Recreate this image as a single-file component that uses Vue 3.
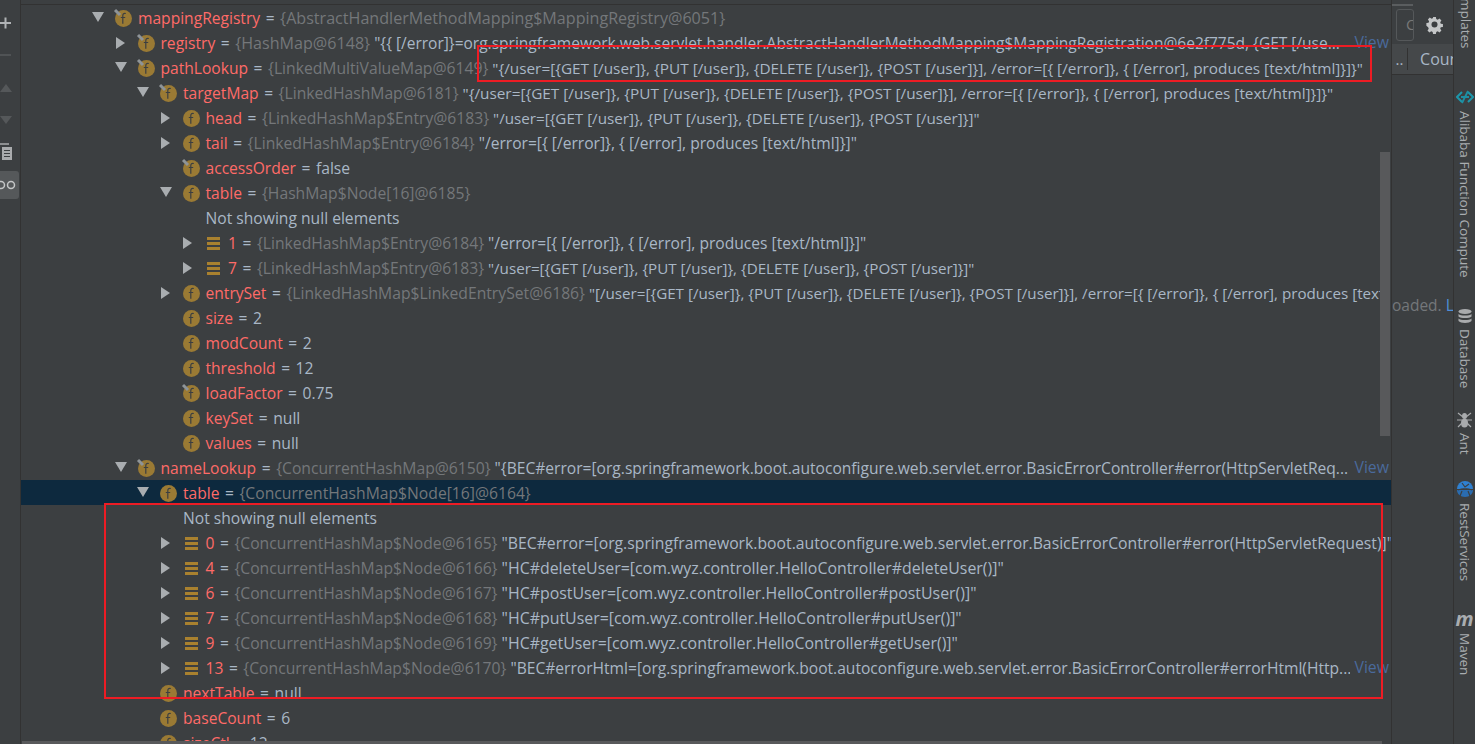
<script setup>
const rows = [
  { l: 0, a: 'd', i: 'fp', n: 'mappingRegistry', t: '{AbstractHandlerMethodMapping$MappingRegistry@6051}', tw: true },
  { l: 1, a: 'r', i: 'fp', n: 'registry', t: '{HashMap@6148}', v: '"{{ [/error]}=org.springframework.web.servlet.handler.AbstractHandlerMethodMapping$MappingRegistration@6e2f775d, {GET [/use...', view: true, s: 'reg', tw: true },
  { l: 1, a: 'd', i: 'fp', n: 'pathLookup', t: '{LinkedMultiValueMap@6149}', v: '"{/user=[{GET [/user]}, {PUT [/user]}, {DELETE [/user]}, {POST [/user]}], /error=[{ [/error]}, { [/error], produces [text/html]}]}"', s: 'map' },
  { l: 2, a: 'd', i: 'fp', n: 'targetMap', t: '{LinkedHashMap@6181}', v: '"{/user=[{GET [/user]}, {PUT [/user]}, {DELETE [/user]}, {POST [/user]}], /error=[{ [/error]}, { [/error], produces [text/html]}]}"', s: 'map' },
  { l: 3, a: 'r', i: 'f', n: 'head', t: '{LinkedHashMap$Entry@6183}', v: '"/user=[{GET [/user]}, {PUT [/user]}, {DELETE [/user]}, {POST [/user]}]"' },
  { l: 3, a: 'r', i: 'f', n: 'tail', t: '{LinkedHashMap$Entry@6184}', v: '"/error=[{ [/error]}, { [/error], produces [text/html]}]"', s: 'long' },
  { l: 3, i: 'fp', n: 'accessOrder', p: 'false' },
  { l: 3, a: 'd', i: 'f', n: 'table', t: '{HashMap$Node[16]@6185}' },
  { l: 3, note: 'Not showing null elements' },
  { l: 4, a: 'r', i: 'e', n: '1', t: '{LinkedHashMap$Entry@6184}', v: '"/error=[{ [/error]}, { [/error], produces [text/html]}]"', s: 'long' },
  { l: 4, a: 'r', i: 'e', n: '7', t: '{LinkedHashMap$Entry@6183}', v: '"/user=[{GET [/user]}, {PUT [/user]}, {DELETE [/user]}, {POST [/user]}]"' },
  { l: 3, a: 'r', i: 'f', n: 'entrySet', t: '{LinkedHashMap$LinkedEntrySet@6186}', v: '"[/user=[{GET [/user]}, {PUT [/user]}, {DELETE [/user]}, {POST [/user]}], /error=[{ [/error]}, { [/error], produces [text]' },
  { l: 3, i: 'f', n: 'size', p: '2' },
  { l: 3, i: 'f', n: 'modCount', p: '2' },
  { l: 3, i: 'f', n: 'threshold', p: '12' },
  { l: 3, i: 'fp', n: 'loadFactor', p: '0.75' },
  { l: 3, i: 'f', n: 'keySet', p: 'null' },
  { l: 3, i: 'f', n: 'values', p: 'null' },
  { l: 1, a: 'd', i: 'fp', n: 'nameLookup', t: '{ConcurrentHashMap@6150}', v: '"{BEC#error=[org.springframework.boot.autoconfigure.web.servlet.error.BasicErrorController#error(HttpServletReq...', view: true, s: 'long' },
  { l: 2, a: 'd', i: 'f', n: 'table', t: '{ConcurrentHashMap$Node[16]@6164}', sel: true },
  { l: 2, note: 'Not showing null elements' },
  { l: 3, a: 'r', i: 'e', n: '0', t: '{ConcurrentHashMap$Node@6165}', v: '"BEC#error=[org.springframework.boot.autoconfigure.web.servlet.error.BasicErrorController#error(HttpServletRequest)]"', s: 'err' },
  { l: 3, a: 'r', i: 'e', n: '4', t: '{ConcurrentHashMap$Node@6166}', v: '"HC#deleteUser=[com.wyz.controller.HelloController#deleteUser()]"', s: 'hc' },
  { l: 3, a: 'r', i: 'e', n: '6', t: '{ConcurrentHashMap$Node@6167}', v: '"HC#postUser=[com.wyz.controller.HelloController#postUser()]"', s: 'hc' },
  { l: 3, a: 'r', i: 'e', n: '7', t: '{ConcurrentHashMap$Node@6168}', v: '"HC#putUser=[com.wyz.controller.HelloController#putUser()]"', s: 'hc' },
  { l: 3, a: 'r', i: 'e', n: '9', t: '{ConcurrentHashMap$Node@6169}', v: '"HC#getUser=[com.wyz.controller.HelloController#getUser()]"', s: 'hc' },
  { l: 3, a: 'r', i: 'e', n: '13', t: '{ConcurrentHashMap$Node@6170}', v: '"BEC#errorHtml=[org.springframework.boot.autoconfigure.web.servlet.error.BasicErrorController#errorHtml(Http...', view: true, s: 'long' },
  { l: 2, i: 'f', n: 'nextTable', p: 'null' },
  { l: 2, i: 'f', n: 'baseCount', p: '6' },
  { l: 2, i: 'f', n: 'sizeCtl', p: '12' }
]
const indent = (r) => ({ paddingLeft: (r.sel ? 71 : 92) + r.l * 22.5 + 'px' })
const sideItems = [
  { label: 'Alibaba Function Compute', cls: 'afc' },
  { label: 'Database', cls: 'db' },
  { label: 'Ant', cls: 'ant' },
  { label: 'RestServices', cls: 'rest' },
  { label: 'Maven', cls: 'mvn' }
]
</script>

<template>
  <div class="ide">
    <aside class="gutter">
      <svg class="g-plus" width="12" height="12" viewBox="0 0 12 12"><path d="M0 6h11M5.500 .5v11" stroke="#b0b3b5" stroke-width="2" /></svg>
      <div class="g-minus"></div>
      <svg class="g-up" width="12" height="8" viewBox="0 0 12 8"><path d="M0 8L6 0l6 8z" fill="#55585a" /></svg>
      <svg class="g-down" width="12" height="8" viewBox="0 0 12 8"><path d="M0 0l6 8 6-8z" fill="#55585a" /></svg>
      <svg class="g-copy" width="14" height="18" viewBox="0 0 14 18"><path d="M0 1h9" stroke="#a9abad" stroke-width="1.500" fill="none" /><rect x="2" y="4" width="10" height="13" fill="#a9abad" /><path d="M4 7.500h6M4 10.500h6M4 13.500h6" stroke="#3c3f41" /></svg>
      <div class="g-glasses">
        <svg width="16" height="10" viewBox="0 0 16 10"><circle cx="1" cy="5" r="3.500" fill="none" stroke="#c4c6c7" stroke-width="1.500" /><circle cx="11" cy="5" r="3.500" fill="none" stroke="#c4c6c7" stroke-width="1.500" /></svg>
      </div>
    </aside>

    <main class="tree">
      <div class="tree-top"></div>
      <div v-for="(r, i) in rows" :key="i" class="row" :class="{ sel: r.sel }" :style="indent(r)">
        <span class="arrow">
          <svg v-if="r.a === 'd'" width="13" height="11" viewBox="0 0 13 11"><path d="M0 0h12L6 10z" fill="#a9adb0" /></svg>
          <svg v-else-if="r.a === 'r'" width="11" height="12" viewBox="0 0 11 12"><path d="M1 0l9 6-9 6z" fill="#a9adb0" /></svg>
        </span>
        <span class="icon">
          <svg v-if="r.i === 'f' || r.i === 'fp'" width="20" height="20" viewBox="0 0 20 20">
            <circle cx="10.500" cy="10.500" r="8.500" fill="#9a7a34" />
            <path d="M12.800 5.500c-2-.6-3 .4-3 2.200v8M7.800 9.500h4.400" fill="none" stroke="#3c3f41" stroke-width="1.200" />
            <path v-if="r.i === 'fp'" d="M2 2l5 5" stroke="#8e9498" stroke-width="3" />
          </svg>
          <svg v-else-if="r.i === 'e'" width="20" height="20" viewBox="0 0 20 20">
            <path d="M4 4h13v3H4zM4 9h13v3H4zM4 14h13v3H4z" fill="#a9812f" />
          </svg>
        </span>
        <span v-if="r.note" class="note">{{ r.note }}</span>
        <template v-else>
          <span class="name">{{ r.n }}</span>
          <span class="eq">=</span>
          <span v-if="r.t" class="type" :class="{ wide: r.tw }">{{ r.t }}</span>
          <span v-if="r.v" class="val" :class="r.s">&nbsp;{{ r.v }}</span>
          <span v-if="r.p" class="prim">{{ r.p }}</span>
        </template>
        <a v-if="r.view" class="view">View</a>
      </div>
      <div class="vscroll"></div>
      <div class="hscroll"></div>
      <div class="mark mark-top"></div>
      <div class="mark mark-bottom"></div>
    </main>

    <section class="panel">
      <div class="panel-head">
        <div class="search"><span class="search-c">C</span></div>
        <svg class="gear" width="18" height="18" viewBox="0 0 18 18">
          <path d="M7.500 1h3l.4 2.300 1.500.7 2-1.300 2 2.100-1.300 1.900.6 1.500 2.300.4v3l-2.300.4-.6 1.500 1.300 1.900-2 2.100-2-1.300-1.500.7-.4 2.300h-3l-.4-2.300-1.500-.7-2 1.300-2-2.100 1.300-1.900-.6-1.500L.4 10.500v-3l2.300-.4.600-1.500L2 3.700l2-2.100 2 1.300 1.500-.7z" transform="scale(.94)" fill="#c4c6c7" />
          <circle cx="8.500" cy="8.500" r="3" fill="#3c3f41" />
        </svg>
      </div>
      <div class="panel-tabs">
        <span class="dots">..</span>
        <span class="count">Coun</span>
      </div>
      <div class="loaded"><span>oaded.</span> <a>L</a></div>
    </section>

    <nav class="side">
      <div class="side-first">mplates</div>
      <div v-for="s in sideItems" :key="s.label" class="side-item" :class="s.cls">
        <svg v-if="s.cls === 'afc'" width="18" height="18" viewBox="0 0 18 18"><path d="M6 4L1 9l5 5M12 4l5 5-5 5" fill="none" stroke="#1d97ab" stroke-width="2" /><path d="M5 9h8M6 15L12 3" stroke="#1d8fa3" stroke-width="1.800" /></svg>
        <svg v-else-if="s.cls === 'db'" width="14" height="15" viewBox="0 0 14 15"><ellipse cx="7" cy="2.500" rx="6.500" ry="2.500" fill="#a9abad" /><path d="M.5 5c2 2 11 2 13 0v2.500c-2 2-11 2-13 0zM.5 9.500c2 2 11 2 13 0v2.500c-2 2.500-11 2.500-13 0z" fill="#a9abad" /></svg>
        <svg v-else-if="s.cls === 'ant'" width="15" height="16" viewBox="0 0 15 16"><ellipse cx="7.500" cy="4" rx="2.500" ry="3" fill="#a9abad" /><ellipse cx="7.500" cy="11" rx="3.500" ry="4.500" fill="#a9abad" /><path d="M1 1l5 4M14 1L9 5M0 8h5M15 8h-5M1 15l4-4M14 15l-4-4" stroke="#a9abad" stroke-width="1.200" /></svg>
        <svg v-else-if="s.cls === 'rest'" width="18" height="18" viewBox="0 0 18 18"><path d="M1 9a8 8 0 0 1 16 0z" fill="#2f80d0" /><path d="M1 10h16c0 4-3.500 7-8 7s-8-3-8-7z" fill="#2a6cb0" /><path d="M2 10c4-2 10-2 14 0M6 3l3 4 4-3M6 11l-2 5M12 11l2 5" stroke="#3c3f41" stroke-width="1.200" fill="none" /></svg>
        <span v-else-if="s.cls === 'mvn'" class="mvn-m">m</span>
        <span class="side-label">{{ s.label }}</span>
      </div>
    </nav>
  </div>
</template>

<style scoped>
.ide { display: flex; width: 1475px; height: 744px; overflow: hidden; background: #3c3f41; font-family: "Open Sans", "Noto Sans", sans-serif; font-size: 15px; }
.gutter { position: relative; width: 20px; flex: none; border-right: 1px solid #323232; box-sizing: content-box; overflow: hidden; }
.g-plus { position: absolute; left: 0; top: 17px; }
.g-minus { position: absolute; left: 0; top: 54px; width: 11px; height: 2px; background: #505355; }
.g-up { position: absolute; left: 0; top: 84px; }
.g-down { position: absolute; left: 0; top: 116px; }
.g-copy { position: absolute; left: 0; top: 143px; }
.g-glasses { position: absolute; left: 0; top: 171px; width: 19px; height: 28px; background: #55585a; border-radius: 0 3px 3px 0; display: flex; align-items: center; }
.tree { position: relative; width: 1370px; flex: none; height: 744px; overflow: hidden; border-right: 1px solid #323232; box-sizing: content-box; }
.tree-top { height: 4px; border-bottom: 1px solid #323232; }
.row { display: flex; align-items: center; height: 25px; white-space: nowrap; overflow: hidden; position: relative; box-sizing: border-box; color: #a9b7c6; margin-left: -21px; }
.row.sel { background: #0d293e; margin-left: 0; }
.arrow { width: 21px; flex: none; display: flex; align-items: center; }
.icon { width: 20px; height: 20px; flex: none; margin-right: 5px; display: flex; align-items: center; }
.icon svg { display: block; }
.name { color: #ff6b68; font-size: 15.600px; }
.eq { color: #a9b7c6; width: 20px; flex: none; text-align: center; font-size: 15.500px; }
.type { color: #74777a; font-size: 15.700px; }
.type.wide { font-size: 16.100px; }
.val { color: #a9b7c6; font-size: 15.200px; }
.val.map { font-size: 15.350px; }
.val.reg { font-size: 15.500px; }
.val.long { font-size: 15.600px; }
.val.err { font-size: 15.750px; }
.val.hc { font-size: 15.900px; }
.prim { color: #a9b7c6; font-size: 15.700px; }
.note { color: #a9b7c6; font-size: 15.650px; }
.view { position: absolute; right: 0; top: 0; height: 25px; padding-left: 4px; padding-right: 2px; line-height: 25px; background: #3c3f41; color: #4a6a9c; font-size: 15.800px; }
.vscroll { position: absolute; right: 1px; top: 152px; width: 10px; height: 284px; background: #58595b; }
.hscroll { position: absolute; left: 1px; bottom: 0; width: 1360px; height: 3px; background: #58595b; }
.mark { position: absolute; border: 2px solid #ed1c24; box-sizing: border-box; pointer-events: none; }
.mark-top { left: 456px; top: 45px; width: 895px; height: 37px; }
.mark-bottom { left: 83px; top: 503px; width: 1279px; height: 196px; }
.panel { position: relative; width: 61px; flex: none; overflow: hidden; color: #a9b7c6; border-right: 1px solid #323232; }
.panel-head { display: flex; align-items: center; height: 44px; padding-left: 4px; padding-top: 6px; box-sizing: border-box; gap: 12px; position: relative; }
.panel-head::before { content: ""; position: absolute; left: 0; top: 4px; width: 21px; height: 2px; background: #5a5d5f; }
.search { width: 16px; height: 30px; border: 1px solid #55585a; border-radius: 3px; overflow: hidden; }
.search-c { color: #777; font-size: 15px; padding-left: 9px; line-height: 28px; }
.panel-tabs { display: flex; height: 30px; background: #45484a; border-bottom: 1px solid #323232; align-items: center; }
.dots { width: 18px; text-align: center; border-right: 1px solid #323232; height: 22px; line-height: 22px; }
.count { padding-left: 12px; overflow: hidden; font-size: 16px; }
.loaded { position: absolute; left: 0; top: 294px; white-space: nowrap; color: #74777a; font-size: 15.500px; }
.loaded a { color: #4e8ed8; }
.side { flex: none; width: 21px; position: relative; overflow: hidden; color: #a9adb0; font-size: 13.500px; }
.side-first { position: absolute; right: 0; top: -2px; writing-mode: vertical-rl; }
.side-item { position: absolute; left: 0; width: 21px; display: flex; flex-direction: column; align-items: center; white-space: nowrap; }
.side-label { writing-mode: vertical-rl; margin-top: 5px; }
.afc { top: 88px; }
.db { top: 309px; }
.ant { top: 412px; }
.rest { top: 480px; }
.mvn { top: 610px; }
.mvn-m { font-weight: 700; font-style: italic; font-size: 20px; line-height: 18px; color: #a9adb0; }
</style>

<style>
html, body { margin: 0; background: #3c3f41; overflow: hidden; }
</style>
